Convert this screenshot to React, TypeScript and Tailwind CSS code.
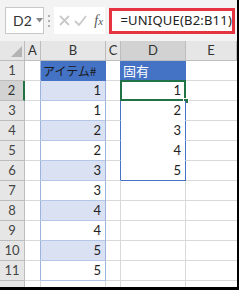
import React from 'react';

const GRID = 'border-[#d9d9d9]';
const font = { fontFamily: '"Lato", "Noto Sans CJK JP", sans-serif' };

const bValues = [1, 1, 2, 2, 3, 3, 4, 4, 5, 5];
const dValues = [1, 2, 3, 4, 5];

const FormulaBar: React.FC = () => (
  <div className="h-[41px] bg-[#f3f3f3] flex items-center pl-[5px] pr-[2px] gap-[3px]">
    {/* Name box */}
    <div className="w-[42px] h-[27px] bg-white border border-[#c8c8c8] flex items-center pl-[7px] gap-[4px]">
      <span className="text-[14px] text-[#333]">D2</span>
      <svg width="7" height="5" viewBox="0 0 7 5">
        <path d="M0 0h7L3.5 4.5z" fill="#8a8a8a" />
      </svg>
    </div>
    {/* Dots */}
    <div className="w-[5px] flex flex-col items-center gap-[3px]">
      <span className="w-[2px] h-[2px] bg-[#b0b0b0]" />
      <span className="w-[2px] h-[2px] bg-[#b0b0b0]" />
      <span className="w-[2px] h-[2px] bg-[#b0b0b0]" />
    </div>
    {/* Cancel / enter / fx */}
    <div className="w-[56px] h-[27px] bg-white flex items-center pl-[5px] gap-[4px]">
      <svg width="11" height="11" viewBox="0 0 11 11">
        <path d="M1 1l9 9M10 1l-9 9" stroke="#c9c9c9" strokeWidth="1.8" />
      </svg>
      <svg width="13" height="11" viewBox="0 0 13 11">
        <path d="M1 6l4 4 7-9" stroke="#c9c9c9" strokeWidth="1.8" fill="none" />
      </svg>
      <span className="text-[14px] italic text-[#555] ml-[3px]" style={{ fontFamily: '"Liberation Serif", serif' }}>
        f<span className="text-[11px]">x</span>
      </span>
    </div>
    {/* Formula */}
    <div className="flex-1 h-[26px] bg-white border-[3px] border-[#e3343f] flex items-center pl-[8px] ml-[1px]">
      <span className="text-[13px] text-[#222] tracking-[0.2px]" style={{ fontFamily: '"Noto Sans", sans-serif' }}>
        =UNIQUE(B2:B11)
      </span>
    </div>
  </div>
);

const App: React.FC = () => {
  const rows = Array.from({ length: 12 }, (_, i) => i + 1);

  return (
    <div className="w-[239px] h-[290px] overflow-hidden bg-white border-r-2 border-b-[3px] border-black" style={font}>
      <FormulaBar />

      <div className="grid grid-cols-[25px_16px_65px_15px_65px_1fr]">
        {/* column headers */}
        <div className="h-[20px] bg-[#e6e6e6] border-r border-b border-[#bdbdbd] relative">
          <svg className="absolute right-[2px] bottom-[3px]" width="11" height="11" viewBox="0 0 11 11">
            <path d="M11 0v11H0z" fill="#b4b4b4" />
          </svg>
        </div>
        {['A', 'B', 'C', 'D', 'E'].map((c) => (
          <div
            key={c}
            className={`h-[20px] border-r border-b border-[#bdbdbd] flex items-center justify-center text-[13px] text-[#333] ${
              c === 'D' ? 'bg-[#d2d2d2]' : 'bg-[#e6e6e6]'
            }`}
          >
            {c}
          </div>
        ))}

        {rows.map((r) => {
          const inB = r <= 11;
          const inD = r <= 6;
          const band = r >= 2 && r <= 11 && r % 2 === 0;
          return (
            <React.Fragment key={r}>
              {/* row header (row 12 only peeks in at the bottom edge) */}
              <div
                className={`h-[20px] flex items-center justify-center text-[13px] border-b ${
                  r === 2
                    ? 'bg-[#d2d2d2] text-[#333] border-r-2 border-r-[#217346] border-b-[#bdbdbd]'
                    : 'bg-[#e6e6e6] text-[#444] border-r border-[#bdbdbd]'
                }`}
              >
                {r <= 11 ? r : null}
              </div>
              {/* A */}
              <div className={`h-[20px] border-b ${GRID} border-r ${inB ? 'border-r-[#9bb3dd]' : ''}`} />
              {/* B */}
              <div
                className={`h-[20px] border-b border-r flex items-center text-[13px] ${
                  r === 1
                    ? 'bg-[#4472c4] border-[#4472c4] text-[#1a1a1a] pl-[2px]'
                    : inB
                    ? `${band ? 'bg-[#d9e1f2]' : 'bg-white'} border-b-[#b4c6e7] border-r-[#9bb3dd] justify-end pr-[4px] text-[#222]`
                    : GRID
                }`}
                style={r === 1 ? { fontFamily: '"Noto Sans CJK JP", sans-serif', fontSize: 12 } : undefined}
              >
                {r === 1 ? 'アイテム#' : inB ? bValues[r - 2] : null}
              </div>
              {/* C */}
              <div className={`h-[20px] border-b ${GRID} border-r ${inD ? 'border-r-[#4472c4]' : ''}`} />
              {/* D */}
              <div
                className={`h-[20px] border-r flex items-center text-[13px] relative ${
                  r === 1
                    ? 'bg-[#4472c4] border-b border-[#4472c4] text-white pl-[2px]'
                    : inD
                    ? `bg-white border-r-[#4472c4] justify-end pr-[4px] text-[#222] ${r === 6 ? 'border-b border-b-[#4472c4]' : 'border-b border-b-white'}`
                    : `border-b ${GRID}`
                }`}
                style={r === 1 ? { fontFamily: '"Noto Sans CJK JP", sans-serif', fontSize: 13 } : undefined}
              >
                {r === 1 ? '固有' : inD ? dValues[r - 2] : null}
                {r === 2 && (
                  <>
                    <div className="absolute -left-[1px] -top-[1px] -right-[1px] -bottom-[1px] border-2 border-[#217346]" />
                    <div className="absolute -right-[4px] -bottom-[4px] w-[6px] h-[6px] bg-[#217346] border border-white" />
                  </>
                )}
              </div>
              {/* E */}
              <div className={`h-[20px] border-b ${GRID}`} />
            </React.Fragment>
          );
        })}
      </div>
    </div>
  );
};

export default App;
